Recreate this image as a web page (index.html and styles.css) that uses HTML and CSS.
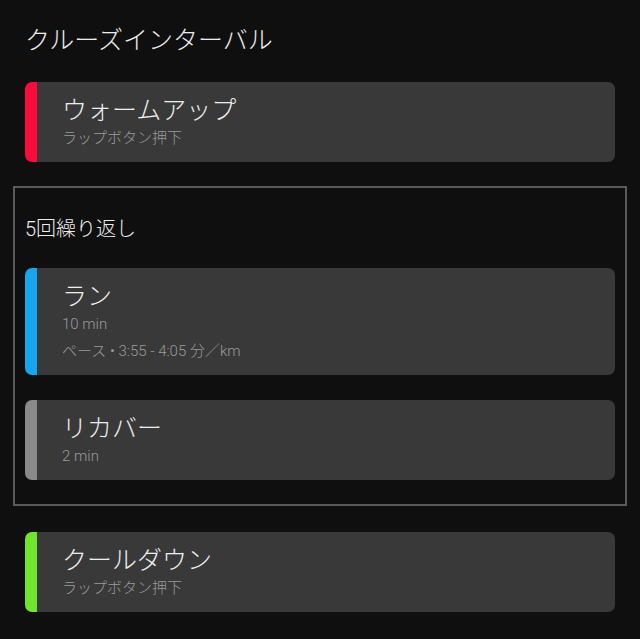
FILE: index.html
```html
<!DOCTYPE html>
<html>
<head>
  <meta charset="UTF-8">
  <title>クルーズインターバル</title>
  <link rel="stylesheet" href="styles.css">
</head>
<body>
  <div class="page">
    <h1 class="workout-title">クルーズインターバル</h1>

    <div class="step warmup">
      <div class="step-name">ウォームアップ</div>
      <div class="step-detail">ラップボタン押下</div>
    </div>

    <div class="repeat-group">
      <div class="repeat-label">5回繰り返し</div>
      <div class="step run">
        <div class="step-name">ラン</div>
        <div class="step-detail">10 min</div>
        <div class="step-detail extra">ペース • 3:55 - 4:05 分／km</div>
      </div>
      <div class="step recovery">
        <div class="step-name">リカバー</div>
        <div class="step-detail">2 min</div>
      </div>
    </div>

    <div class="step cooldown">
      <div class="step-name">クールダウン</div>
      <div class="step-detail">ラップボタン押下</div>
    </div>
  </div>
</body>
</html>
```

FILE: styles.css
```css
html, body {
  margin: 0;
  background: #0f0f0f;
}
body {
  width: 640px;
  height: 639px;
  overflow: hidden;
  font-family: "Roboto", "Noto Sans CJK JP", sans-serif;
  font-weight: 300;
  color: #ededed;
}
.page {
  padding: 26px 0 0 0;
  display: flex;
  flex-direction: column;
}
.workout-title {
  margin: 0 0 26px 25px;
  font-size: 25px;
  line-height: 30px;
  font-weight: 300;
}
.step {
  margin: 0 25px;
  padding: 14px 20px 14px 25px;
  background: #393939;
  border-left: 12px solid #888;
  border-radius: 7px;
}
.step.warmup {
  border-left-color: #ff0a3c;
}
.step.run {
  border-left-color: #14a6ee;
}
.step.recovery {
  border-left-color: #8a8a8a;
}
.step.cooldown {
  border-left-color: #6fe62a;
}
.step-name {
  font-size: 25px;
  line-height: 30px;
  color: #ededed;
}
.step-detail {
  margin-top: 2px;
  font-size: 15px;
  line-height: 20px;
  color: #9a9a9a;
}
.step-detail.extra {
  margin-top: 7px;
}
.repeat-group {
  margin: 24px 13px 26px 13px;
  padding: 28px 10px 24px 10px;
  border: 2px solid #5a5a5a;
  display: flex;
  flex-direction: column;
  gap: 25px;
}
.repeat-group .step {
  margin: 0;
}
.repeat-label {
  margin-bottom: 1px;
  font-size: 20px;
  line-height: 26px;
  color: #ededed;
}
```
